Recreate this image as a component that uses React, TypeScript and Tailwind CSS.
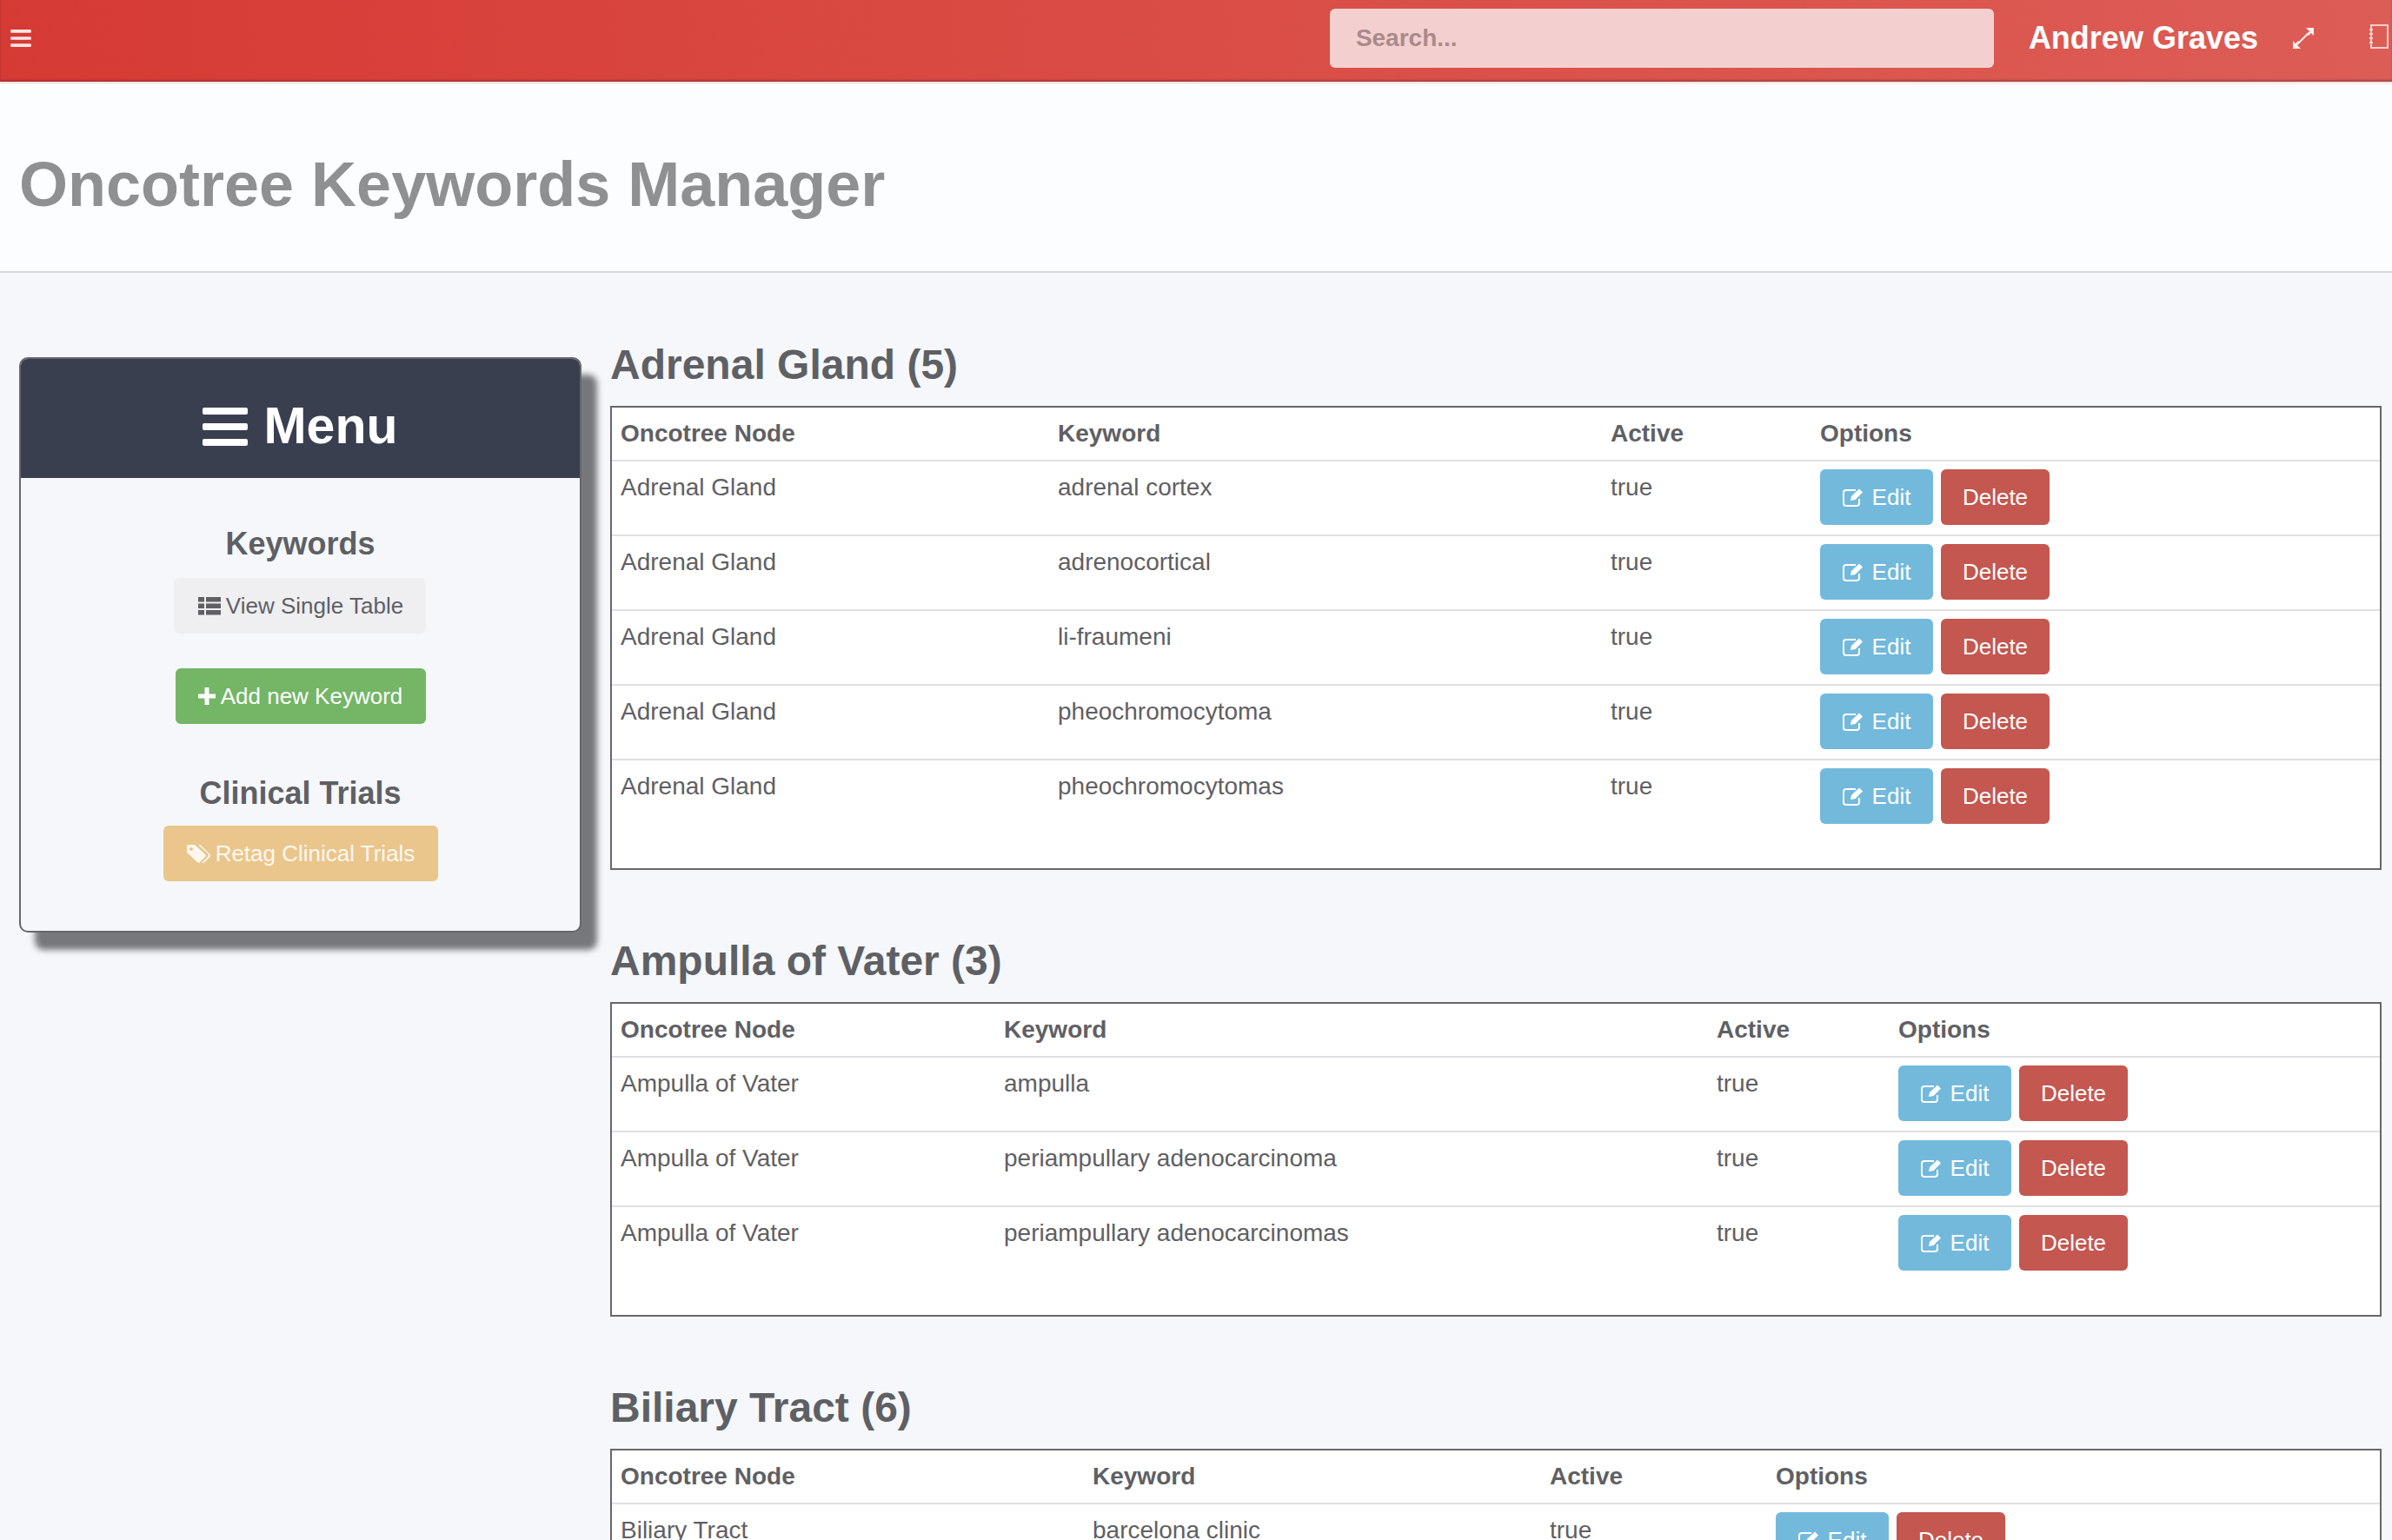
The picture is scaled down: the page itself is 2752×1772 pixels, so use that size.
import React from "react";

function Pencil() {
  return (
    <svg viewBox="0 0 26 22" className="w-[26px] h-[22px] shrink-0 fill-none stroke-current">
      <path d="M19 13v5a3 3 0 0 1-3 3H4a3 3 0 0 1-3-3V6a3 3 0 0 1 3-3h11" strokeWidth="2" />
      <path d="M9 15l1-5L19 1.500l4 4L14.500 14z" fill="currentColor" stroke="none" />
    </svg>
  );
}

function Tag() {
  return (
    <svg viewBox="0 0 28 22" className="w-[28px] h-[22px] shrink-0 fill-current">
      <path
        fillRule="evenodd"
        d="M1 3a2 2 0 0 1 2-2h7l12 11a2 2 0 0 1 0 3l-6 6a2 2 0 0 1-3 0L1 10zM6 4a2 2 0 1 0 .01 0z"
      />
      <path d="M14 1h2.500l11 11a2 2 0 0 1 0 3l-6 6a2 2 0 0 1-3 .5l6.500-6.500a3 3 0 0 0 0-4z" />
    </svg>
  );
}

function ListIcon() {
  return (
    <svg viewBox="0 0 26 22" className="w-[26px] h-[22px] shrink-0 fill-current">
      <rect x="0" y="1" width="7" height="5.5" />
      <rect x="9" y="1" width="17" height="5.5" />
      <rect x="0" y="8.500" width="7" height="5.5" />
      <rect x="9" y="8.500" width="17" height="5.5" />
      <rect x="0" y="16" width="7" height="5.5" />
      <rect x="9" y="16" width="17" height="5.5" />
    </svg>
  );
}

function Bars({ cls }: { cls: string }) {
  return (
    <svg viewBox="0 0 52 44" className={cls + " fill-current"}>
      <rect x="0" y="0" width="52" height="8" rx="2" />
      <rect x="0" y="18" width="52" height="8" rx="2" />
      <rect x="0" y="36" width="52" height="8" rx="2" />
    </svg>
  );
}

function Row({ node, keyword }: { node: string; keyword: string }) {
  return (
    <tr className="border-t-2 border-[#dfe0e4] align-top">
      <td className="pl-[10px] pt-[10px] leading-[40px]">{node}</td>
      <td className="pl-[10px] pt-[10px] leading-[40px]">{keyword}</td>
      <td className="pl-[10px] pt-[10px] leading-[40px]">true</td>
      <td className="pl-[10px] pt-[9px] pb-[11px]">
        <div className="flex gap-[9px] text-[26px] text-white">
          <button className="h-[64px] w-[130px] rounded-[6px] bg-[#73b9db] flex items-center justify-center gap-[8px]">
            <Pencil />
            Edit
          </button>
          <button className="h-[64px] w-[125px] rounded-[6px] bg-[#c4574f] flex items-center justify-center">
            Delete
          </button>
        </div>
      </td>
    </tr>
  );
}

function Section({
  title,
  node,
  keywords,
  cols,
}: {
  title: string;
  node: string;
  keywords: string[];
  cols: string[];
}) {
  return (
    <section>
      <h2 className="text-[48px] font-bold leading-[60px] text-[#5e6064] mb-[17px]">{title}</h2>
      <div className="border-2 border-[#66676b] bg-white pb-[40px]">
        <table className="w-full table-fixed text-[28px] text-[#5f6064] border-collapse">
          <colgroup>
            <col className={cols[0]} />
            <col className={cols[1]} />
            <col className={cols[2]} />
            <col />
          </colgroup>
          <thead>
            <tr>
              <th className="text-left font-bold pl-[10px] h-[61px]">Oncotree Node</th>
              <th className="text-left font-bold pl-[10px]">Keyword</th>
              <th className="text-left font-bold pl-[10px]">Active</th>
              <th className="text-left font-bold pl-[10px]">Options</th>
            </tr>
          </thead>
          <tbody>
            {keywords.map((k) => (
              <Row key={k} node={node} keyword={k} />
            ))}
          </tbody>
        </table>
      </div>
    </section>
  );
}

function Btn({ cls, children }: { cls: string; children: React.ReactNode }) {
  return (
    <button className={"h-[64px] rounded-[6px] flex items-center justify-center gap-[6px] text-[26px] " + cls}>
      {children}
    </button>
  );
}

export default function App() {
  return (
    <div className="h-[1772px] w-[2752px] overflow-hidden bg-[#f5f7fa] font-['Liberation_Sans',Arial,sans-serif]">
      <header className="h-[94px] pb-[6px] flex items-center bg-gradient-to-r from-[#d63a34] to-[#dc5d56] shadow-[inset_0_-2px_2px_rgba(90,40,40,0.4),0_2px_2px_rgba(220,90,80,0.2)] relative">
        <Bars cls="w-[24px] h-[20px] ml-[12px] text-[#fbe6e4]" />
        <div className="ml-auto w-[764px] h-[68px] rounded-[6px] bg-[#f4cfd0] flex items-center pl-[30px] text-[28px] font-bold text-[#a98a8c]">
          Search...
        </div>
        <div className="ml-[40px] text-[36px] font-bold text-white">Andrew Graves</div>
        <svg viewBox="0 0 24 24" className="ml-[40px] w-[24px] h-[24px] text-[#fdf0ef] fill-current">
          <path d="M15 0h9v9l-3-3-3 3-2-2 3-3zM9 24H0v-9l3 3 3-3 2 2-3 3z" />
          <path d="M6 18L18 6" stroke="currentColor" strokeWidth="2" />
        </svg>
        <svg
          viewBox="0 0 22 28"
          className="ml-[64px] mr-[4px] mb-[5px] w-[22px] h-[28px] shrink-0 fill-none stroke-[#f7cfcb]"
        >
          <rect x="2" y="1" width="19" height="26" strokeWidth="2" />
          <path d="M0 6h4M0 11h4M0 16h4M0 21h4" strokeWidth="2" />
        </svg>
      </header>
      <div className="h-[220px] bg-[#fcfdfe] border-b-2 border-[#d5d8dc] flex items-center pl-[22px]">
        <h1 className="text-[72px] font-bold text-[#8f9092] mt-[18px]">Oncotree Keywords Manager</h1>
      </div>
      <main className="flex pl-[22px] pr-[12px] pt-[76px] gap-[33px]">
        <aside className="w-[647px] shrink-0">
          <div className="h-[662px] mt-[21px] rounded-[10px] border-2 border-[#66676b] bg-[#f5f7fa] shadow-[18px_20px_7px_#77787b] overflow-hidden text-center">
            <div className="h-[137px] pt-[18px] bg-[#3a3f50] text-white flex items-center justify-center gap-[18px]">
              <Bars cls="w-[52px] h-[44px]" />
              <span className="text-[59px] font-bold">Menu</span>
            </div>
            <div className="flex flex-col items-center">
              <h3 className="text-[36px] font-bold text-[#5e6064] mt-[54px] leading-[44px]">Keywords</h3>
              <Btn cls="w-[290px] mr-[2px] pl-[3px] bg-[#efeff2] text-[#5e6064] mt-[17px]">
                <ListIcon /> View Single Table
              </Btn>
              <Btn cls="w-[288px] bg-[#74b566] text-white mt-[40px]">
                <svg viewBox="0 0 20 20" className="w-[20px] h-[20px] fill-current">
                  <path d="M7.500 0h5v7.500H20v5h-7.500V20h-5v-7.500H0v-5h7.500z" />
                </svg>
                Add new Keyword
              </Btn>
              <h3 className="text-[36px] font-bold text-[#5e6064] mt-[58px] leading-[44px]">Clinical Trials</h3>
              <Btn cls="w-[316px] bg-[#eac68d] text-[#fdf8ef] mt-[15px]">
                <Tag /> Retag Clinical Trials
              </Btn>
            </div>
          </div>
        </aside>
        <div className="flex-1 flex flex-col gap-[75px]">
          <Section
            title="Adrenal Gland (5)"
            node="Adrenal Gland"
            cols={["w-[503px]", "w-[636px]", "w-[241px]"]}
            keywords={["adrenal cortex", "adrenocortical", "li-fraumeni", "pheochromocytoma", "pheochromocytomas"]}
          />
          <Section
            title="Ampulla of Vater (3)"
            node="Ampulla of Vater"
            cols={["w-[441px]", "w-[820px]", "w-[209px]"]}
            keywords={["ampulla", "periampullary adenocarcinoma", "periampullary adenocarcinomas"]}
          />
          <Section
            title="Biliary Tract (6)"
            node="Biliary Tract"
            cols={["w-[543px]", "w-[526px]", "w-[260px]"]}
            keywords={["barcelona clinic", "biliary tract"]}
          />
        </div>
      </main>
    </div>
  );
}
